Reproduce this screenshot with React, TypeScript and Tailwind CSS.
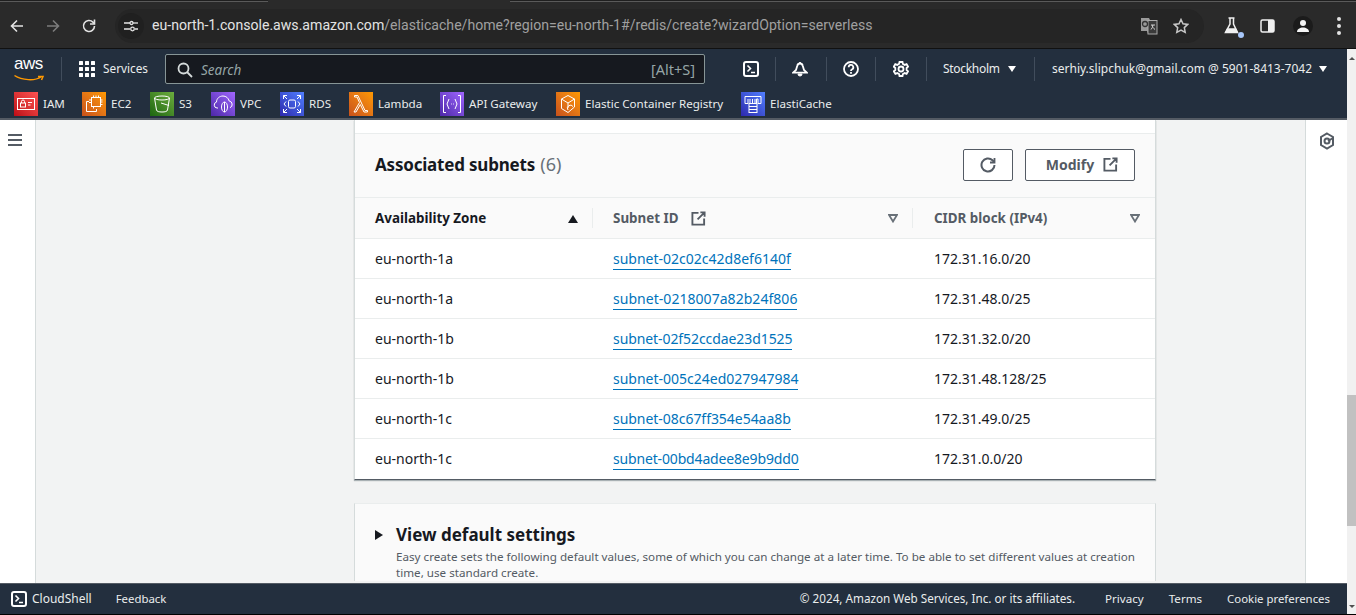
import React from "react";

const FONT = { fontFamily: '"Noto Sans", sans-serif' };

function Tile({ from, to, children }: { from: string; to: string; children: React.ReactNode }) {
  return (
    <span className={`flex h-6 w-6 shrink-0 items-center justify-center bg-linear-to-tr ${from} ${to}`}>
      <svg width="20" height="20" viewBox="0 0 20 20" fill="none" stroke="#fff" strokeWidth="1">{children}</svg>
    </span>
  );
}

const favs: { label: string; w: string; from: string; to: string; icon: React.ReactNode }[] = [
  { label: "IAM", w: "w-[21px]", from: "from-[#bd0816]", to: "to-[#ff5252]", icon: <><rect x="1.5" y="4.5" width="17" height="11" /><rect x="4.5" y="9" width="5" height="4" /><path d="M5.5 9V7.5a1.5 1.5 0 0 1 3 0V9M12 8.5h4M12 11h2.5" /></> },
  { label: "EC2", w: "w-[21px]", from: "from-[#c8511b]", to: "to-[#ff9900]", icon: <><rect x="7.5" y="3.5" width="9" height="9" /><path d="M9.5 1.5v2M12 1.5v2M14.5 1.5v2M9.5 12.5v2M18.5 6h-2M18.5 8h-2M18.5 10.5h-2M7.5 6H5M7.5 8.5H5" /><path d="M5 7.5H2.5v10h10V15" /></> },
  { label: "S3", w: "w-[14px]", from: "from-[#1b660f]", to: "to-[#6cae3e]", icon: <><ellipse cx="10" cy="4" rx="7.5" ry="2" /><path d="M2.5 4l2 12c.3 1.5 2.5 2 5.5 2s5.2-.5 5.5-2l2-12" /><path d="M9 9l8 2.5" /></> },
  { label: "VPC", w: "w-[22px]", from: "from-[#4d27a8]", to: "to-[#a166ff]", icon: <><path d="M5 14H4a3 3 0 0 1-.5-5.9C3.5 4.500 6.500 2 10 2c3 0 5.500 2 6.200 5a3.500 3.500 0 0 1 .8 6.700" /><ellipse cx="11.500" cy="13" rx="3" ry="5" /><path d="M11.500 8v10" /></> },
  { label: "RDS", w: "w-[22px]", from: "from-[#2e27ad]", to: "to-[#527fff]", icon: <><rect x="6.500" y="6" width="7" height="8" rx="1.500" /><path d="M1.500 5V1.500H5M15 1.500h3.500V5M18.500 15v3.500H15M5 18.500H1.500V15M1.500 1.500l3.500 3.500M18.500 1.500L15 5M18.500 18.500L15 15M1.500 18.500L5 15M4 7.500L2 10l2 2.500M16 7.500l2 2.500-2 2.500" /></> },
  { label: "Lambda", w: "w-[44px]", from: "from-[#c8511b]", to: "to-[#ff9900]", icon: <path d="M3 18l5.500-9.500L6 3H3.500V1.500h3.400L14 16.500h2.500v1.500h-3.500L9.300 10.500 5 18z" /> },
  { label: "API Gateway", w: "w-[69px]", from: "from-[#4d27a8]", to: "to-[#a166ff]", icon: <><path d="M4 1.500H1.500v17H4M16 1.500h2.500v17H16" /><path d="M7 5l-2 5 2 5M13 5l2 5-2 5" /><path d="M9 10h.5M11 10h.5" strokeWidth="1.500" /></> },
  { label: "Elastic Container Registry", w: "w-[138px]", from: "from-[#c8511b]", to: "to-[#ff9900]", icon: <><path d="M10 1.500l6.500 3.500v8l-6.500 5.500-6.500-4V5z" /><path d="M3.500 5l6.500 4 6.500-4M10 9v5" /><path d="M10 16a3 3 0 1 1 5-3.500" /></> },
  { label: "ElastiCache", w: "w-[62px]", from: "from-[#2e27ad]", to: "to-[#527fff]", icon: <><path d="M2 9.500V2.500h16v7h-3V5h-1.500v4.500M12 5v4M9.500 5v4M7 5v4M5 5v4.500H2" /><rect x="6" y="9.500" width="8" height="9" /><path d="M6 12.500h8M6 15.500h8" /></> },
];

function Caret({ className = "" }: { className?: string }) {
  return <span className={`block h-0 w-0 border-x-[4px] border-t-[6px] border-x-transparent border-t-white ${className}`} />;
}

function Ext({ size = 16, color = "#545b64" }: { size?: number; color?: string }) {
  return (
    <svg width={size} height={size} viewBox="0 0 16 16" fill="none" stroke={color} strokeWidth="2">
      <path d="M8 2H1.500v12.500H14V8M10 1.500h4.500V6M14.500 1.500L7 9" />
    </svg>
  );
}

function Term({ size = 16 }: { size?: number }) {
  return (
    <svg width={size} height={size} viewBox="0 0 16 16" fill="none" stroke="#fff" strokeWidth="2">
      <rect x="1" y="1" width="14" height="14" rx="2" />
      <path d="M4.500 4.500L7.500 7.500L4.500 10.500M8 11.500h4" strokeWidth="1.600" />
    </svg>
  );
}

function Divider() {
  return <span className="block h-6 w-px bg-[#414d5c]" />;
}

function SortHeader({ label, active, ext, className }: { label: string; active?: boolean; ext?: boolean; className: string }) {
  return (
    <div className={`flex h-full items-center pt-[1px] ${className}`}>
      <span className={`text-[13.400px] font-bold ${active ? "text-[#16191f]" : "text-[#545b64]"}`}>{label}</span>
      {ext && <span className="ml-[12px]"><Ext size={15} /></span>}
      <span className="ml-auto">
        {active ? (
          <span className="block h-0 w-0 border-x-[5.500px] border-b-[8px] border-x-transparent border-b-[#16191f]" />
        ) : (
          <svg width="10" height="9" viewBox="0 0 10 9" className="block" fill="none" stroke="#687078" strokeWidth="1.800"><path d="M1 1h8L5 7.500z" /></svg>
        )}
      </span>
    </div>
  );
}

const rows = [
  ["eu-north-1a", "subnet-02c02c42d8ef6140f", "172.31.16.0/20", ""],
  ["eu-north-1a", "subnet-0218007a82b24f806", "172.31.48.0/25", "tracking-[0.04px]"],
  ["eu-north-1b", "subnet-02f52ccdae23d1525", "172.31.32.0/20", "tracking-[-0.08px]"],
  ["eu-north-1b", "subnet-005c24ed027947984", "172.31.48.128/25", ""],
  ["eu-north-1c", "subnet-08c67ff354e54aa8b", "172.31.49.0/25", "tracking-[-0.04px]"],
  ["eu-north-1c", "subnet-00bd4adee8e9b9dd0", "172.31.0.0/20", "tracking-[-0.16px]"],
];

function ChromeBar() {
  return (
    <div className="flex h-[49px] shrink-0 flex-col bg-[#2a2a2a]">
      <div className="flex h-[3px] shrink-0">
        <div className="h-[2px] w-[268px] border-b border-[#5a5a5a] bg-[#1f1f1f]" />
        <div className="h-[3px] w-[242px] bg-[#2a2a2a]" />
        <div className="h-[2px] flex-1 border-b border-[#5a5a5a] bg-[#1f1f1f]" />
      </div>
      <div className="flex flex-1 items-center border-b border-[#111] pl-[9px]">
        <svg width="16" height="16" viewBox="0 0 16 16" fill="none" stroke="#e3e3e3" strokeWidth="1.600"><path d="M14 8H2.500M8 2.500L2.500 8L8 13.500" /></svg>
        <svg width="16" height="16" viewBox="0 0 16 16" fill="none" stroke="#7c7c7c" strokeWidth="1.600" className="ml-[20px]"><path d="M2 8h11.500M8 2.500L13.500 8L8 13.500" /></svg>
        <svg width="16" height="16" viewBox="0 0 16 16" fill="none" stroke="#e3e3e3" strokeWidth="1.600" className="ml-[20px]"><path d="M13.500 8a5.500 5.500 0 1 1-1.600-3.900L13.500 5.700" /><path d="M13.500 1.500v4.500H9" /></svg>
        <div className="ml-[18px] flex h-[34px] w-[1089px] items-center rounded-full bg-[#252525] pl-[3px]">
          <span className="flex h-[26px] w-[26px] items-center justify-center rounded-full bg-[#202020]">
            <svg width="14" height="12" viewBox="0 0 14 12" fill="none" stroke="#e3e3e3" strokeWidth="1.300"><path d="M0 3h6M11 9H14M0 9h6" /><path d="M9 3h5" /><circle cx="7.500" cy="3" r="1.500" /><circle cx="8.500" cy="9" r="1.800" /></svg>
          </span>
          <span className="ml-[8px] text-[14.100px] text-[#e3e3e3]" style={{ fontFamily: '"Roboto", sans-serif' }}>
            eu-north-1.console.aws.amazon.com<span className="text-[#a0a0a0]">/elasticache/home?region=eu-north-1#/redis/create?wizardOption=serverless</span>
          </span>
          <span className="ml-auto mr-[15px] flex items-center gap-[15px]">
            <svg width="18" height="18" viewBox="0 0 18 18"><path d="M1 1h8l1 2h7v14H8l-1-3H1z" fill="#9a9a9a" /><rect x="8" y="3.500" width="9" height="13.500" fill="#3a3a3a" stroke="#aaa" /><circle cx="5" cy="7" r="2.500" fill="none" stroke="#333" strokeWidth="1.300" /><path d="M11 8h4M13 8c-.3 2-1 3.500-2 4.500M12 8c.5 2 1.500 3.500 3 4.500" stroke="#ccc" fill="none" /></svg>
            <svg width="16" height="16" viewBox="0 0 16 16" fill="none" stroke="#c7c7c7" strokeWidth="1.500"><path d="M8 1.500l2 4.300 4.700.6-3.400 3.200.9 4.700L8 12l-4.200 2.300.9-4.700L1.300 6.400 6 5.800z" /></svg>
          </span>
        </div>
        <span className="relative ml-[20px] block">
          <svg width="16" height="18" viewBox="0 0 16 18" fill="none" stroke="#f0f0f0" strokeWidth="1.500" className="block"><path d="M4.500 1h6M6 1v6L1.500 15.500h12L9.500 7V1" /><path d="M3.500 12h8l1.500 3H2z" fill="#f0f0f0" /></svg>
          <span className="absolute right-[-4px] bottom-[-3px] h-[6px] w-[6px] rounded-full bg-[#a8c7fa]" />
        </span>
        <svg width="15" height="14" viewBox="0 0 15 14" className="ml-[20px]"><rect x="1" y="1" width="13" height="12" rx="1.500" fill="none" stroke="#f0f0f0" strokeWidth="1.500" /><rect x="8" y="1" width="6" height="12" fill="#f0f0f0" /></svg>
        <span className="ml-[18px] flex h-5 w-5 items-center justify-center rounded-full bg-[#1b1b1b]">
          <svg width="14" height="14" viewBox="0 0 14 14" fill="#f5f5f5"><circle cx="7" cy="4" r="3" /><path d="M1 13c0-3 3-4.500 6-4.500s6 1.500 6 4.500z" /></svg>
        </span>
        <span className="ml-[24px] flex flex-col gap-[3px]">
          <span className="h-[4px] w-[4px] rounded-full bg-[#e3e3e3]" />
          <span className="h-[4px] w-[4px] rounded-full bg-[#e3e3e3]" />
          <span className="h-[4px] w-[4px] rounded-full bg-[#e3e3e3]" />
        </span>
      </div>
    </div>
  );
}

function Header() {
  return (
    <header className="shrink-0 border-b-2 border-[#545b64] bg-[#232f3e] text-white">
      <div className="flex h-[43px] items-center pb-[3px] pl-[14px] text-[12px]">
        <span className="relative block h-[24px] w-[31px]">
          <span className="absolute top-[-3px] left-0 text-[17px] leading-[20px] font-medium tracking-[-0.5px]" style={{ fontFamily: '"Liberation Sans", sans-serif' }}>aws</span>
          <svg width="31" height="8" viewBox="0 0 31 8" className="absolute bottom-[-1px] left-0" fill="none" stroke="#f90" strokeWidth="1.500"><path d="M0.500 1.500C8 6.500 21 7 27 3M24 2.500h5l-1.500 3.500" /></svg>
        </span>
        <span className="ml-[16px] h-[24px] w-px bg-[#414d5c]" />
        <svg width="16" height="16" viewBox="0 0 16 16" fill="#fff" className="ml-[17px]">
          {[0, 6, 12].flatMap((x) => [0, 6, 12].map((y) => <rect key={`${x}-${y}`} x={x} y={y} width="4" height="4" rx="0.500" />))}
        </svg>
        <span className="ml-[8px] w-[45px] text-[11.800px] whitespace-nowrap text-[#eaeded]">Services</span>
        <div className="ml-[17px] flex h-[30px] w-[540px] items-center rounded-[2px] border border-[#879596] bg-[#16191f] pr-[9px] pl-[11px]">
          <svg width="16" height="16" viewBox="0 0 16 16" fill="none" stroke="#d5dbdb" strokeWidth="1.800" className="mt-[1px]"><circle cx="6.500" cy="6.500" r="5" /><path d="M10 10l5 5" /></svg>
          <span className="mt-[2px] ml-[8px] text-[13.500px] text-[#95a5a6] italic">Search</span>
          <span className="mt-[1px] ml-auto text-[14.500px] text-[#95a5a6]">[Alt+S]</span>
        </div>
        <span className="ml-[38px]"><Term /></span>
        <span className="ml-[16px]"><Divider /></span>
        <svg width="16" height="16" viewBox="0 0 16 16" fill="none" stroke="#fff" strokeWidth="1.800" className="ml-[16px]"><path d="M8 2.500c-1.500 0-2.500 1-2.800 2.500L4 9l-3 2.700h14L12 9l-1.200-4C10.500 3.500 9.500 2.500 8 2.500z" /><path d="M8 1v1.500" /><path d="M6 13a2 2 0 0 0 4 0z" fill="#fff" strokeWidth="1" /></svg>
        <span className="ml-[18px]"><Divider /></span>
        <svg width="16" height="16" viewBox="0 0 16 16" fill="none" stroke="#fff" strokeWidth="1.800" className="ml-[16px]"><circle cx="8" cy="8" r="7" /><path d="M5.700 6.200a2.300 2.300 0 1 1 3.400 2c-.8.400-1.100.9-1.100 1.800M8 11v1.800" /></svg>
        <span className="ml-[16px]"><Divider /></span>
        <svg width="16" height="16" viewBox="0 0 16 16" fill="none" stroke="#fff" strokeWidth="1.800" className="ml-[17px]"><circle cx="8" cy="8" r="2.500" /><path d="M6.500 1h3l.4 2 1.800.9 1.900-.8 1.500 2.600-1.500 1.300v2l1.500 1.300-1.500 2.600-1.900-.8-1.800.9-.4 2h-3l-.4-2-1.800-.9-1.900.8L.8 10.300 2.300 9V7L.8 5.700l1.500-2.600 1.900.8L6 3z" /></svg>
        <span className="ml-[17px]"><Divider /></span>
        <span className="ml-[16px] w-[57px] text-[12px] tracking-[-0.3px] whitespace-nowrap text-[#eaeded]">Stockholm</span>
        <Caret className="ml-[8px]" />
        <span className="ml-[18px]"><Divider /></span>
        <span className="ml-[17px] w-[261px] whitespace-nowrap text-[#eaeded]">serhiy.slipchuk@gmail.com @ 5901-8413-7042</span>
        <Caret className="ml-[6px]" />
      </div>
      <div className="flex h-[26px] items-start gap-[18px] pl-[14px] text-[11.600px] text-[#eaeded]">
        {favs.map((f) => (
          <span key={f.label} className="flex h-6 items-center gap-[5px]">
            <Tile from={f.from} to={f.to}>{f.icon}</Tile>
            <span className={`${f.w} whitespace-nowrap`}>{f.label}</span>
          </span>
        ))}
      </div>
    </header>
  );
}

function Table() {
  return (
    <section className="border-x border-b border-b-[#545b64] border-x-[#d5dbdb] bg-white shadow-[0_1px_1px_rgba(0,28,36,0.3)]">
      <div className="h-[14px] border-b border-[#eaeded]" />
      <div className="flex h-[64px] items-center border-b border-[#eaeded] bg-[#fafafa] pr-[20px] pb-[2px] pl-[20px]">
        <h2 className="text-[17px] font-bold tracking-[-0.2px] text-[#16191f]">
          Associated subnets <span className="ml-[1px] text-[18px] font-normal tracking-normal text-[#687078]">(6)</span>
        </h2>
        <button className="ml-auto flex h-[32px] w-[50px] items-center justify-center rounded-[2px] border border-[#545b64] bg-white">
          <svg width="16" height="16" viewBox="0 0 16 16" fill="none" stroke="#545b64" strokeWidth="2"><path d="M14.500 8a6.500 6.500 0 1 1-2-4.700L14.500 5.200" /><path d="M14.500 1v4.500H10" strokeWidth="1.800" /></svg>
        </button>
        <button className="ml-[12px] flex h-[32px] w-[110px] items-center justify-center gap-[9px] rounded-[2px] border border-[#545b64] bg-white pl-[4px] text-[14px] font-bold text-[#545b64]">
          Modify <Ext size={15} />
        </button>
      </div>
      <div className="flex h-[41px] border-b border-[#eaeded] bg-[#fafafa]">
        <SortHeader label="Availability Zone" active className="w-[237px] pr-[14px] pl-[20px]" />
        <div className="my-[10px] w-px bg-[#eaeded]" />
        <SortHeader label="Subnet ID" ext className="w-[319px] pr-[14px] pl-[20px]" />
        <div className="my-[10px] w-px bg-[#eaeded]" />
        <SortHeader label="CIDR block (IPv4)" className="flex-1 pr-[15px] pl-[21px]" />
      </div>
      {rows.map((r, i) => (
        <div key={r[1]} className={`flex h-[40px] items-center text-[14px] text-[#16191f] ${i < 5 ? "border-b border-[#eaeded]" : "pb-[1px]"}`}>
          <span className="w-[238px] pl-[20px]">{r[0]}</span>
          <a className="w-[320px] pl-[20px]"><span className={`border-b border-[#0073bb] pb-[1px] text-[#0073bb] ${r[3]}`}>{r[1]}</span></a>
          <span className="pl-[21px]">{r[2]}</span>
        </div>
      ))}
    </section>
  );
}

export default function App() {
  return (
    <div className="relative flex h-[615px] w-[1356px] flex-col overflow-hidden bg-[#f2f3f3]" style={FONT}>
      <ChromeBar />
      <div className="flex min-h-0 flex-1">
        <div className="flex min-w-0 flex-1 flex-col">
          <Header />
          <div className="flex min-h-0 flex-1">
            <nav className="w-[36px] shrink-0 border-r border-[#d5dbdb] bg-white pt-[14px] pl-[8px]">
              <span className="flex w-[14px] flex-col gap-[3px]">
                <span className="h-[2px] bg-[#545b64]" />
                <span className="h-[2px] bg-[#545b64]" />
                <span className="h-[2px] bg-[#545b64]" />
              </span>
            </nav>
            <main className="min-w-0 flex-1 overflow-hidden pl-[318px]">
              <div className="w-[802px]">
                <Table />
                <section className="mt-[23px] border-x border-t border-x-[#d5dbdb] border-t-[#eaeded] bg-[#fafafa] pt-[17px] pr-[20px] pl-[20px]">
                  <div className="flex items-center">
                    <span className="h-0 w-0 border-y-[5px] border-l-[8px] border-y-transparent border-l-[#16191f]" />
                    <h3 className="ml-[13px] text-[17px] leading-[28px] font-bold text-[#16191f]">View default settings</h3>
                  </div>
                  <p className="pl-[21px] text-[11.650px] leading-[16px] text-[#545b64]">
                    Easy create sets the following default values, some of which you can change at a later time. To be able to set different values at creation time, use standard create.
                  </p>
                </section>
              </div>
            </main>
            <aside className="flex w-[42px] shrink-0 justify-center border-l border-[#d5dbdb] bg-white pt-[12px]">
              <svg width="16" height="18" viewBox="0 0 16 18" fill="none" stroke="#545b64" strokeWidth="2"><path d="M8 1.500l6 3.500v8l-6 3.500L2 13V5z" /><circle cx="8" cy="9" r="2.500" /><path d="M9 9l5-3" /></svg>
            </aside>
          </div>
          <footer className="flex h-[31px] shrink-0 items-center border-t border-[#545b64] bg-[#232f3e] pr-[17px] pl-[11px] text-[11.600px] text-[#eaeded]">
            <Term size={16} />
            <span className="ml-[5px] text-[12px]">CloudShell</span>
            <span className="ml-[24px] text-[11.400px]">Feedback</span>
            <span className="ml-auto text-[11.700px]">© 2024, Amazon Web Services, Inc. or its affiliates.</span>
            <span className="ml-[30px]">Privacy</span>
            <span className="ml-[25px]">Terms</span>
            <span className="ml-[25px] text-[11.400px]">Cookie preferences</span>
          </footer>
        </div>
        <div className="flex w-[9px] shrink-0 flex-col bg-[#f1f1f1]">
          <span className="mx-auto mt-[8px] h-0 w-0 border-x-[3px] border-b-[3px] border-x-transparent border-b-[#505050]" />
          <span className="mt-[335px] h-[131px] bg-[#c1c1c1]" />
          <span className="mx-auto mt-auto mb-[6px] h-0 w-0 border-x-[3px] border-t-[3px] border-x-transparent border-t-[#505050]" />
        </div>
      </div>
      <div className="h-px shrink-0 bg-black" />
    </div>
  );
}
